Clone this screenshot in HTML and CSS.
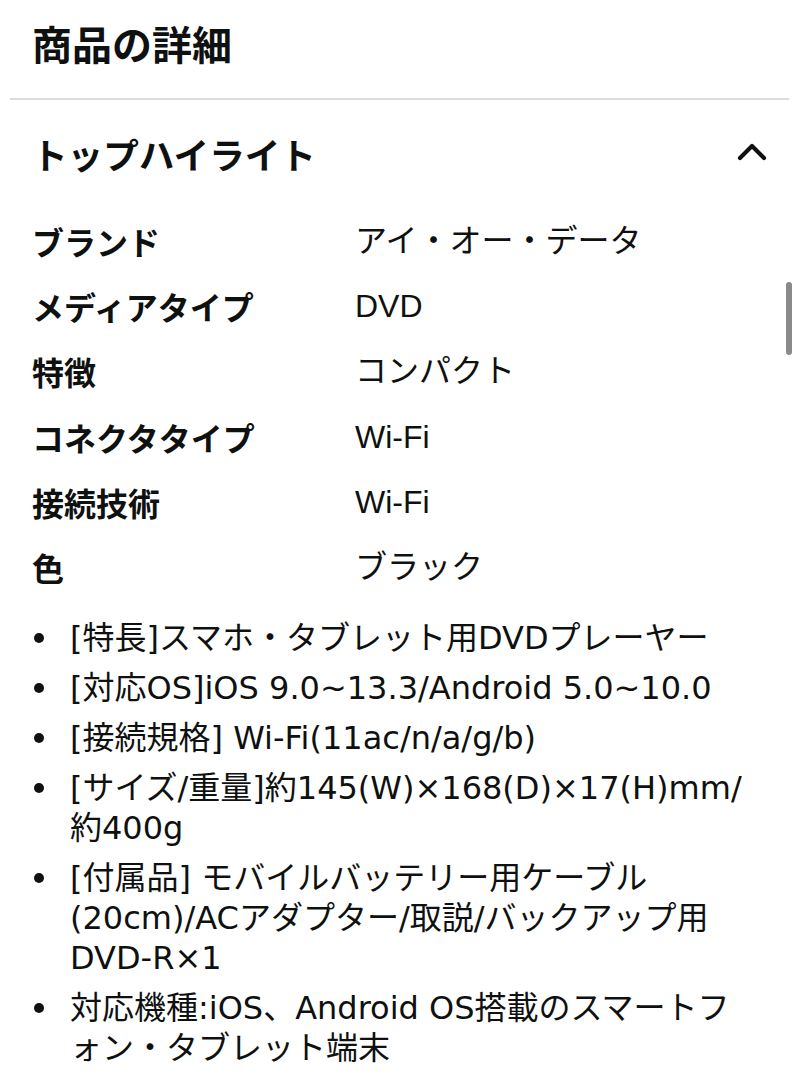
FILE: index.html
```html
<!DOCTYPE html>
<html lang="ja">
<head>
<meta charset="utf-8">
<title>商品の詳細</title>
<link rel="stylesheet" href="styles.css">
</head>
<body>
<div class="page">
  <h1 class="title">商品の詳細</h1>
  <hr class="divider">
  <div class="content">
    <div class="section-head">
      <h2 class="section-title">トップハイライト</h2>
      <svg class="chevron" width="32" height="22" viewBox="0 0 32 22" aria-hidden="true">
        <polyline points="4,18 16,6 28,18" fill="none" stroke="#0f1111" stroke-width="4.2" stroke-linecap="round" stroke-linejoin="round"/>
      </svg>
    </div>
    <div class="specs">
      <div class="label">ブランド</div><div class="value">アイ・オー・データ</div>
      <div class="label">メディアタイプ</div><div class="value">DVD</div>
      <div class="label">特徴</div><div class="value">コンパクト</div>
      <div class="label">コネクタタイプ</div><div class="value">Wi-Fi</div>
      <div class="label">接続技術</div><div class="value">Wi-Fi</div>
      <div class="label">色</div><div class="value">ブラック</div>
    </div>
    <ul class="bullets">
      <li><span class="txt">[特長]スマホ・タブレット用DVDプレーヤー</span></li>
      <li><span class="txt">[対応OS]iOS 9.0~13.3/Android 5.0~10.0</span></li>
      <li><span class="txt">[接続規格] Wi-Fi(11ac/n/a/g/b)</span></li>
      <li><span class="txt">[サイズ/重量]約145(W)×168(D)×17(H)mm/<br>約400g</span></li>
      <li><span class="txt">[付属品] モバイルバッテリー用ケーブル<br>(20cm)/ACアダプター/取説/バックアップ用<br>DVD-R×1</span></li>
      <li><span class="txt">対応機種:iOS、Android OS搭載のスマートフ<br>ォン・タブレット端末</span></li>
    </ul>
  </div>
  <div class="scrollbar"></div>
</div>
</body>
</html>
```

FILE: styles.css
```css
html, body {
  margin: 0;
  padding: 0;
  background: #ffffff;
}

body {
  font-family: "Liberation Sans", "Noto Sans CJK JP", sans-serif;
  color: #0f1111;
  width: 799px;
  overflow: hidden;
}

.page {
  position: relative;
  height: 1080px;
  overflow: hidden;
}

.title {
  margin: 0;
  padding: 15px 32px 0 32px;
  font-family: "Noto Sans CJK JP", sans-serif;
  font-size: 40px;
  font-weight: 700;
  line-height: 56px;
  height: 56px;
}

.divider {
  margin: 27px 10px 0 10px;
  border: 0;
  height: 2px;
  background: #dcdcdc;
}

.content {
  padding: 0 31px 0 32px;
}

.section-head {
  height: 108px;
  display: flex;
  align-items: center;
  justify-content: space-between;
}

.section-title {
  margin: 0;
  font-family: "Noto Sans CJK JP", sans-serif;
  font-size: 35.6px;
  font-weight: 700;
  line-height: 48px;
}

.chevron {
  display: block;
  margin-right: 0;
  position: relative;
  top: -3px;
}

.specs {
  display: grid;
  grid-template-columns: 323px 1fr;
  grid-auto-rows: 65.3px;
  align-items: center;
  font-size: 32px;
  line-height: 40px;
}

.label {
  font-family: "Noto Sans CJK JP", sans-serif;
  font-weight: 700;
}

.value {
  font-weight: 400;
}

.bullets {
  list-style: none;
  margin: 18px 0 0 0;
  padding: 0;
  font-family: "DejaVu Sans", "Noto Sans CJK JP", sans-serif;
  font-size: 32px;
  line-height: 40px;
}

.bullets li {
  display: grid;
  grid-template-columns: 38px 1fr;
  margin-bottom: 10px;
}

.bullets li::before {
  content: "";
  width: 10px;
  height: 10px;
  border-radius: 50%;
  background: #0f1111;
  margin: 15px 0 0 2px;
}

.txt {
  white-space: nowrap;
}

.scrollbar {
  position: absolute;
  left: 786px;
  top: 282px;
  width: 6px;
  height: 73px;
  border-radius: 3px;
  background: #8a8a8a;
}
```
